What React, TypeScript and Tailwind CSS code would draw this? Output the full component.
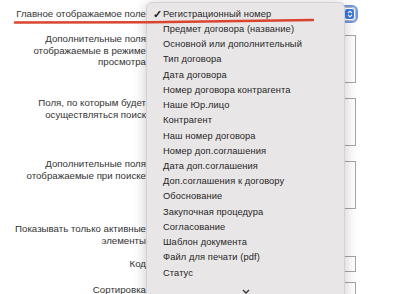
import React from "react";

const items = [
  "Регистрационный номер",
  "Предмет договора (название)",
  "Основной или дополнительный",
  "Тип договора",
  "Дата договора",
  "Номер договора контрагента",
  "Наше Юр.лицо",
  "Контрагент",
  "Наш номер договора",
  "Номер доп.соглашения",
  "Дата доп.соглашения",
  "Доп.соглашения к договору",
  "Обоснование",
  "Закупочная процедура",
  "Согласование",
  "Шаблон документа",
  "Файл для печати (pdf)",
  "Статус",
];

const font = { fontFamily: '"Liberation Sans", Arial, sans-serif' };

function Label({ lines, className = "" }: { lines: string[]; className?: string }) {
  return (
    <div className={`w-[149px] shrink-0 pr-[3px] text-right text-[9.7px] leading-[11.7px] text-[#333] whitespace-nowrap ${className}`}>
      {lines.map((l) => (
        <div key={l}>{l}</div>
      ))}
    </div>
  );
}

export default function App() {
  return (
    <div className="relative w-[403px] h-[294px] overflow-hidden bg-white" style={font}>
      {/* form behind the open menu */}
      <div className="flex flex-col">
        <div className="mt-[6px] flex h-[15px] items-center">
          <Label lines={["Главное отображаемое поле"]} />
          <div className="ml-[3px] flex h-[14px] w-[204px] items-center justify-end rounded-[4px] border border-[#b9b9b9] bg-white pr-[1px] outline outline-[2.5px] outline-[#6f9ae6]">
            <div className="flex h-[10px] w-[9px] flex-col items-center justify-center rounded-[2px] bg-[#3d7be0]">
              <svg width="6" height="8" viewBox="0 0 6 8" fill="none" stroke="white" strokeWidth="1.1">
                <path d="M1 3 L3 1.2 L5 3" />
                <path d="M1 5 L3 6.8 L5 5" />
              </svg>
            </div>
          </div>
        </div>

        <div className="mt-[14px] flex items-start">
          <Label lines={["Дополнительные поля", "отображаемые в режиме", "просмотра"]} className="-mt-[2px]" />
          <div className="ml-[3px] h-[48px] w-[204px] border border-[#a6a6a6] bg-white" />
        </div>

        <div className="mt-[15px] flex items-start">
          <Label lines={["Поля, по которым будет", "осуществляться поиск"]} className="-mt-[1px]" />
          <div className="ml-[3px] h-[48px] w-[204px] border border-[#a6a6a6] bg-white" />
        </div>

        <div className="mt-[15px] flex items-start">
          <Label lines={["Дополнительные поля", "отображаемые при поиске"]} className="mt-[-3px]" />
          <div className="ml-[3px] h-[48px] w-[204px] border border-[#a6a6a6] bg-white" />
        </div>

        <div className="mt-[14px] flex h-[23px] items-start">
          <Label lines={["Показывать только активные", "элементы"]} />
          <div className="ml-[3px] mt-[3px] h-[12px] w-[12px] rounded-[3px] border border-[#a6a6a6] bg-white" />
        </div>

        <div className="mt-[10px] flex h-[16px] items-center">
          <Label lines={["Код"]} />
          <div className="ml-[3px] h-[16px] w-[204px] border border-[#a6a6a6] bg-white" />
        </div>

        <div className="mt-[10px] flex h-[16px] items-center">
          <Label lines={["Сортировка"]} />
          <div className="ml-[3px] h-[16px] w-[204px] border border-[#a6a6a6] bg-white" />
        </div>
      </div>

      {/* open select menu */}
      <div className="absolute left-[146px] top-[2px] h-[310px] w-[199px] rounded-[6px] border border-[#d6d2d3] bg-[#e9e6e7] pt-[4px] shadow-[0_2px_14px_rgba(0,0,0,0.22)]">
        {items.map((it, i) => (
          <div key={it} className="relative flex h-[15.24px] items-center pl-[16px] text-[9.3px] tracking-[0.1px] text-[#1f1f1f]">
            {i === 0 && <span className="absolute left-[6px] text-[11px] font-bold">✓</span>}
            {it}
          </div>
        ))}
        <div className="mt-[8px] flex justify-center">
          <svg width="8" height="5" viewBox="0 0 8 5" fill="none" stroke="#333" strokeWidth="1.3">
            <path d="M1 1 L4 4 L7 1" />
          </svg>
        </div>
      </div>

      {/* red hand-drawn underline */}
      <svg className="pointer-events-none absolute left-0 top-0" width="403" height="40">
        <path d="M15 22.5 L150 22.3 L313 20" stroke="#d9452f" strokeWidth="2.4" fill="none" strokeLinecap="round" />
      </svg>
    </div>
  );
}
